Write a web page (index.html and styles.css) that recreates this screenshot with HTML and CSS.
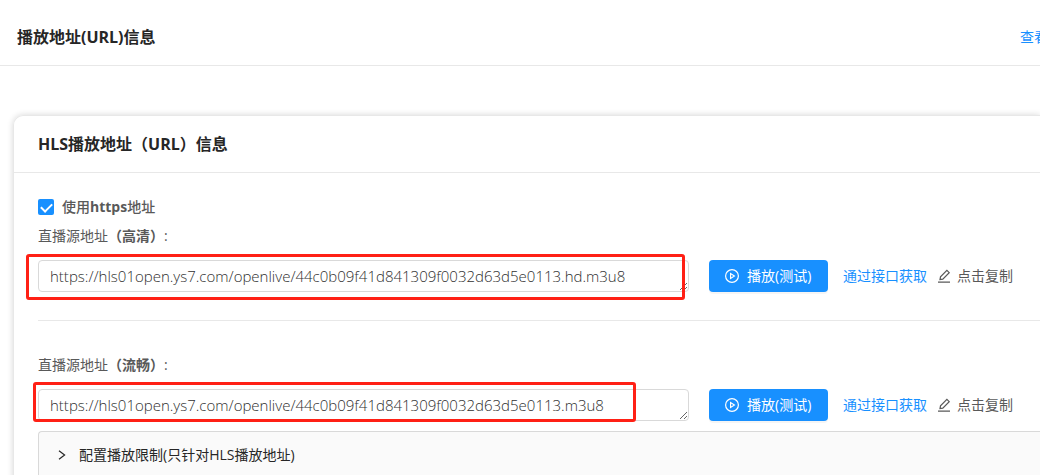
FILE: index.html
```html
<!DOCTYPE html>
<html lang="zh-CN">
<head>
    <meta charset="UTF-8">
    <meta name="viewport" content="width=device-width, initial-scale=1.0">
    <title>播放地址(URL)信息</title>
    <link rel="stylesheet" href="styles.css">
</head>
<body>
    <header class="page-header">
        <h1>播放地址(URL)信息</h1>
        <a class="link" href="#">查看</a>
    </header>

    <main class="card">
        <h2 class="card-title">HLS播放地址（URL）信息</h2>
        <div class="card-body">
            <label class="https-option">
                <input type="checkbox" checked>
                <span>使用<b>https</b>地址</span>
            </label>

            <section class="source">
                <label class="source-label" for="url-hd">直播源地址<b>（高清）</b>:</label>
                <div class="source-row">
                    <div class="field">
                        <textarea id="url-hd" rows="1" spellcheck="false">https://hls01open.ys7.com/openlive/44c0b09f41d841309f0032d63d5e0113.hd.m3u8</textarea>
                        <div class="mark mark-hd"></div>
                    </div>
                    <button class="play" type="button">
                        <svg viewBox="0 0 14 14" width="14" height="14"><circle cx="7" cy="7" r="6.4"/><path d="M5.6 4.5v5L9.4 7z"/></svg>
                        播放(测试)
                    </button>
                    <a class="link" href="#">通过接口获取</a>
                    <button class="copy" type="button">
                        <svg viewBox="0 0 14 14" width="14" height="14"><path d="M1 13.2h12M3 10.6l.5-2.8 6.4-6.4 2.3 2.3-6.4 6.4z"/></svg>
                        点击复制
                    </button>
                </div>
            </section>

            <hr>

            <section class="source">
                <label class="source-label" for="url-sd">直播源地址<b>（流畅）</b>:</label>
                <div class="source-row">
                    <div class="field">
                        <textarea id="url-sd" rows="1" spellcheck="false">https://hls01open.ys7.com/openlive/44c0b09f41d841309f0032d63d5e0113.m3u8</textarea>
                        <div class="mark mark-sd"></div>
                    </div>
                    <button class="play" type="button">
                        <svg viewBox="0 0 14 14" width="14" height="14"><circle cx="7" cy="7" r="6.4"/><path d="M5.6 4.5v5L9.4 7z"/></svg>
                        播放(测试)
                    </button>
                    <a class="link" href="#">通过接口获取</a>
                    <button class="copy" type="button">
                        <svg viewBox="0 0 14 14" width="14" height="14"><path d="M1 13.2h12M3 10.6l.5-2.8 6.4-6.4 2.3 2.3-6.4 6.4z"/></svg>
                        点击复制
                    </button>
                </div>
            </section>

            <button class="collapse" type="button" aria-expanded="false">
                <svg viewBox="0 0 10 10" width="10" height="10"><path d="M2 .8 7.6 5 2 9.2"/></svg>
                配置播放限制(只针对HLS播放地址)
            </button>
        </div>
    </main>
</body>
</html>
```

FILE: styles.css
```css
* {
    box-sizing: border-box;
}

body {
    margin: 0;
    background: #fff;
    color: #595959;
    font-family: "Open Sans", "Noto Sans CJK SC", sans-serif;
    font-size: 14px;
    line-height: 22px;
    overflow: hidden;
}

button,
textarea {
    font: inherit;
    color: inherit;
}

svg {
    flex: none;
    fill: none;
    stroke: currentColor;
    stroke-width: 1.2;
}

h1,
h2 {
    margin: 0;
    color: #262626;
    font-size: 16px;
    font-weight: 700;
    line-height: 24px;
}

.link {
    color: #1890ff;
    text-decoration: none;
    white-space: nowrap;
}

.page-header {
    display: flex;
    align-items: center;
    justify-content: space-between;
    height: 66px;
    padding: 8px 0 0 17px;
    border-bottom: 1px solid #e8e8e8;
}

/* the header link runs past the right edge */
.page-header .link {
    margin-right: -8px;
}

.card {
    margin: 49px 0 0 13px;
    border: 1px solid #e8e8e8;
    border-right: 0;
    border-radius: 10px 0 0 0;
    box-shadow: 0 0 6px rgba(0, 0, 0, 0.16);
}

.card-title {
    padding: 16px 24px;
    border-bottom: 1px solid #e8e8e8;
}

.card-body {
    padding: 23px 0 24px 24px;
}

.https-option {
    display: flex;
    align-items: center;
    gap: 8px;
    font-weight: 500;
}

.https-option b,
.source-label b {
    font-weight: 700;
}

.https-option input {
    appearance: none;
    display: grid;
    place-items: center;
    width: 16px;
    height: 16px;
    margin: 0;
    border-radius: 2px;
    background: #1890ff;
}

.https-option input:checked::before {
    content: "";
    width: 9px;
    height: 5px;
    margin-bottom: 2px;
    border: solid #fff;
    border-width: 0 0 2px 2px;
    transform: rotate(-45deg);
}

.source {
    padding-top: 7px;
}

.source-label {
    display: block;
    margin-bottom: 13px;
}

.source-row {
    display: flex;
    align-items: center;
    margin-right: 27px;
}

.field {
    position: relative;
    flex: 1;
    margin-right: 20px;
}

textarea {
    display: block;
    width: 100%;
    height: 32px;
    padding: 4px 11px;
    border: 1px solid #d9d9d9;
    border-radius: 4px;
    outline: 0;
    background: #fff;
    color: #303030;
    font-size: 15px;
    font-weight: 300;
    overflow: hidden;
    resize: vertical;
}

/* red frames laid over the address boxes */
.mark {
    position: absolute;
    border: 3px solid #ff2015;
    border-radius: 3px;
    pointer-events: none;
}

.mark-hd {
    inset: -6px 4px -8px -12px;
}

.mark-sd {
    inset: -7px 53px -1px -5px;
}

.play {
    display: flex;
    align-items: center;
    gap: 8px;
    min-width: 119px;
    height: 32px;
    margin-right: 15px;
    padding: 0 16px;
    border: 0;
    border-radius: 4px;
    background: #1890ff;
    box-shadow: 0 2px 0 rgba(0, 0, 0, 0.04);
    color: #fff;
    white-space: nowrap;
}

.copy {
    display: flex;
    align-items: center;
    gap: 6px;
    margin-left: 10px;
    padding: 0;
    border: 0;
    background: none;
    white-space: nowrap;
}

hr {
    height: 1px;
    margin: 28px 0 26px;
    border: 0;
    background: #e8e8e8;
}

.collapse {
    display: flex;
    align-items: center;
    gap: 12px;
    width: 100%;
    height: 48px;
    margin-top: 10px;
    padding: 0 18px;
    border: 1px solid #d9d9d9;
    border-right: 0;
    border-radius: 4px 0 0 0;
    background: #fafafa;
    color: #262626;
    text-align: left;
}
```
